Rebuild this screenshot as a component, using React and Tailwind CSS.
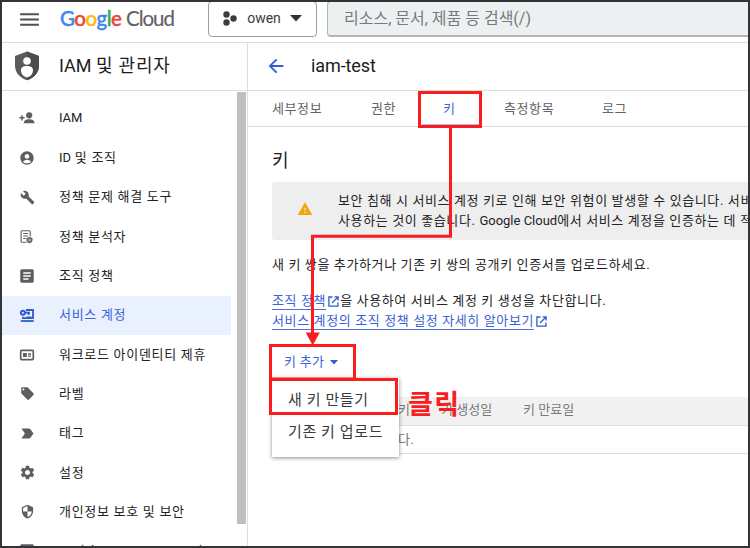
import React from "react";
import {
  MdMenu, MdAccountCircle, MdBuild, MdArticle, MdLocalOffer,
  MdLabelImportant, MdSettings, MdSecurity, MdArrowBack, MdWarning,
} from "react-icons/md";

const FONT = "font-['Roboto','Noto_Sans_CJK_KR',sans-serif]";

function PersonAddIcon() {
  return (
    <svg width="17" height="16" viewBox="0 0 17 16" fill="currentColor">
      <circle cx="10.800" cy="5.200" r="3.300" />
      <path d="M5 13.600c0-3 2.500-4.300 5.800-4.300s5.700 1.300 5.700 4.300z" />
      <path d="M2.400 5h1.600v2h2v1.600H4v2H2.400v-2H.4V7h2z" />
    </svg>
  );
}

function PolicyAnalyzerIcon() {
  return (
    <svg width="16" height="16" viewBox="0 0 16 16" fill="none" stroke="currentColor" strokeWidth="1.1">
      <path d="M7.500 13.200H3.100a1 1 0 0 1-1-1V2.800a1 1 0 0 1 1-1h7.100a1 1 0 0 1 1 1V7.500" />
      <path d="M4.200 4.500h4.900M4.200 7h4.900M4.200 9.500h2.600" />
      <path d="M10.500 8l3 1v2c0 1.800-1.400 2.800-3 3.400-1.600-.6-3-1.600-3-3.400V9z" fill="currentColor" stroke="none" />
      <circle cx="10.500" cy="11" r="1" stroke="white" strokeWidth=".6" />
    </svg>
  );
}

function ServiceAccountIcon() {
  return (
    <svg width="16" height="16" viewBox="0 0 16 16" fill="none" stroke="currentColor" strokeWidth="1.800">
      <circle cx="3.900" cy="5.700" r="2" strokeWidth="2" />
      <path d="M5.800 5.700H11M9.600 5.700v2.200" />
      <path d="M7 3h7v8.200H4V9.800M7.500 10.400h5" />
      <path d="M1.800 14h12.900" />
    </svg>
  );
}

function WorkloadIcon() {
  return (
    <svg width="16" height="16" viewBox="0 0 16 16" fill="none" stroke="currentColor">
      <rect x="1.700" y="3.400" width="12.600" height="9.200" rx="1" strokeWidth="1.700" />
      <rect x="4" y="6" width="3.800" height="4" fill="currentColor" stroke="none" />
      <path d="M9 7h3M9 9.200h3" strokeWidth="1.300" />
    </svg>
  );
}

function ShieldPersonIcon() {
  return (
    <svg width="24" height="30" viewBox="0 0 24 30">
      <path d="M12 .5L24 5v9.500c0 7-5 12.500-12 14.800C5 27 0 21.500 0 14.500V5z" fill="#5a5a5c" />
      <path d="M12 .5L24 5v9.500c0 7-5 12.500-12 14.800z" fill="#4c4c4e" />
      <circle cx="12" cy="10" r="3.800" fill="white" />
      <path d="M6 19.300c0-3 2.500-4.300 6-4.300s6 1.300 6 4.300c0 3.600-2.500 6.400-6 7.200-3.500-.8-6-3.600-6-7.200z" fill="white" />
    </svg>
  );
}

function ProjectIcon() {
  return (
    <svg width="14" height="15" viewBox="0 0 14 15" fill="#3a3c40">
      <circle cx="3.500" cy="3.500" r="3.200" />
      <circle cx="3.500" cy="11.500" r="3.200" />
      <circle cx="10.500" cy="7.500" r="3.200" />
    </svg>
  );
}

function ExternalIcon() {
  return (
    <svg className="ml-[2px] mr-px shrink-0" width="11" height="11" viewBox="0 0 11 11" fill="none" stroke="#2f5bd3" strokeWidth="1.300">
      <path d="M4.500 1H.9v9.100H10V6.500M6.500.900H10.100V4.500M10 1L4 7" />
    </svg>
  );
}

const navItems = [
  { latin: "IAM", label: "", icon: <PersonAddIcon /> },
  { latin: "ID", label: " 및 조직", icon: <MdAccountCircle size={16} /> },
  { label: "정책 문제 해결 도구", icon: <MdBuild size={15} /> },
  { label: "정책 분석자", icon: <PolicyAnalyzerIcon /> },
  { label: "조직 정책", icon: <MdArticle size={18} className="shrink-0" /> },
  { label: "서비스 계정", icon: <ServiceAccountIcon />, active: true },
  { label: "워크로드 아이덴티티 제휴", icon: <WorkloadIcon /> },
  { label: "라벨", icon: <MdLocalOffer size={15} /> },
  { label: "태그", icon: <MdLabelImportant size={17} className="shrink-0" /> },
  { label: "설정", icon: <MdSettings size={17} className="shrink-0" /> },
  { label: "개인정보 보호 및 보안", icon: <MdSecurity size={15} /> },
  { latin: "IAP(Identity-Aware Proxy)", label: "", icon: <MdArticle size={18} className="shrink-0" /> },
];

function NavItem({ item }) {
  return (
    <li className={`flex h-[39.35px] w-[229px] shrink-0 items-center pl-[17px] whitespace-nowrap ${item.active ? "bg-[#eaf1fe] text-[#3b62d6]" : "text-[#232326]"}`}>
      <span className={`flex w-4 justify-center ${item.active ? "text-[#2f5bd3]" : "text-[#5c5e61]"}`}>{item.icon}</span>
      <span className="ml-6 text-[13px] leading-5">
        {item.latin && <span className="tracking-[-0.1px]">{item.latin}</span>}
        <span className="tracking-[0.7px]">{item.label}</span>
      </span>
    </li>
  );
}

function Header() {
  return (
    <header className="flex h-[41px] shrink-0 items-start border-b border-[#dcdddf]">
      <MdMenu size={25} className="mt-[5px] ml-[15px] shrink-0 text-[#505154]" />
      <div className="ml-[18px] flex h-8 w-[148px] shrink-0 items-center gap-[4px] whitespace-nowrap font-['Lato',sans-serif] text-[20.500px] leading-8">
        <span className="w-[62px] tracking-[-0.550px] font-medium [-webkit-text-stroke:0.400px_currentColor]">
          <span className="text-[#4285f4]">G</span>
          <span className="text-[#ea4335]">o</span>
          <span className="text-[#fbbc04]">o</span>
          <span className="text-[#4285f4]">g</span>
          <span className="text-[#34a853]">l</span>
          <span className="text-[#ea4335]">e</span>
        </span>
        <span className="tracking-[-1.050px] text-[#5f6368] [-webkit-text-stroke:0.200px_currentColor]">Cloud</span>
      </div>
      <button className="-mt-px flex h-[36px] w-[109px] shrink-0 items-center rounded-[4px] border border-[#9b9fa4] pb-px pl-[14px]">
        <ProjectIcon />
        <span className="ml-[10px] w-[34px] text-[14px] text-[#3a3c40]">owen</span>
        <svg className="ml-[9px]" width="12" height="7" viewBox="0 0 12 7"><path d="M0 0h12L6 6.500z" fill="#303236" /></svg>
      </button>
      <div className="-mt-px ml-[10px] flex h-[36px] grow items-center rounded-l-[4px] border border-r-0 border-b-2 border-[#b0b6b9] bg-[#ecf0f1] pl-[16px] text-[16px] whitespace-nowrap text-[#777a7d]">
        리소스, 문서, 제품 등 검색(/)
      </div>
    </header>
  );
}

function Sidebar() {
  return (
    <aside className="flex w-[246px] shrink-0 flex-col border-r border-[#dcdddf]">
      <div className="flex h-12 shrink-0 items-center border-b border-[#dcdddf] pb-px pl-[13px]">
        <ShieldPersonIcon />
        <h1 className="ml-5 text-[18px] leading-7 whitespace-nowrap text-[#1d1d20]">
          IAM <span className="tracking-[0.8px]">및 관리자</span>
        </h1>
      </div>
      <div className="flex min-h-0 grow justify-between overflow-hidden">
        <ul className="flex flex-col pt-[7.800px]">
          {navItems.map((item, i) => <NavItem key={i} item={item} />)}
        </ul>
        <div className="mt-px mr-px h-[432px] w-[9px] shrink-0 bg-[#bfbfbf]" />
      </div>
    </aside>
  );
}

const tabs = [
  { label: "세부정보", width: "w-[99px]" },
  { label: "권한", width: "w-[72px]" },
  { label: "키", width: "w-[61px]", active: true },
  { label: "측정항목", width: "w-[98px]" },
  { label: "로그", width: "w-[60px]" },
];

function KeyLink({ children }) {
  return <a className="mt-px border-b border-[#4c6fda] leading-4 text-[#3b62d6]">{children}</a>;
}

function Main() {
  return (
    <main className="flex min-w-0 grow flex-col overflow-hidden text-[13px] tracking-[0.620px] whitespace-nowrap text-[#232326]">
      <div className="flex h-12 shrink-0 items-center border-b border-[#dcdddf] pb-[2px] pl-[17px]">
        <MdArrowBack size={22} className="text-[#2f5bd3]" />
        <h2 className="ml-6 text-[18px] tracking-[-0.100px] text-[#1d1d20]">iam-test</h2>
      </div>
      <nav className="flex h-9 shrink-0 items-center border-b border-[#dcdddf] pl-6 text-[#626467]">
        {tabs.map((t) => (
          <span key={t.label} className={`${t.width} tracking-[0.600px] ${t.active ? "text-[#3b62d6]" : ""}`}>{t.label}</span>
        ))}
      </nav>
      <div className="flex grow flex-col pl-6">
        <h3 className="mt-[20px] h-[28px] text-[18px] leading-7 text-[#1d1d20]">키</h3>
        <div className="mt-[7px] flex h-[58px] shrink-0 items-center rounded-l-[3px] bg-[#eeeeee] pl-[25px]">
          <MdWarning size={16} className="mt-[-5px] shrink-0 text-[#f0a60d]" />
          <p className="ml-[25px] leading-5">
            보안 침해 시 서비스 계정 키로 인해 보안 위험이 발생할 수 있습니다. 서비스<br />
            사용하는 것이 좋습니다. <span className="tracking-normal">Google Cloud</span>에서 서비스 계정을 인증하는 데 적합
          </p>
        </div>
        <p className="mt-[15px] leading-5">새 키 쌍을 추가하거나 기존 키 쌍의 공개키 인증서를 업로드하세요.</p>
        <div className="mt-4 flex h-5 items-center">
          <KeyLink>조직 정책</KeyLink>
          <ExternalIcon />
          <span>을 사용하여 서비스 계정 키 생성을 차단합니다.</span>
        </div>
        <div className="flex h-5 items-center">
          <KeyLink>서비스 계정의 조직 정책 설정 자세히 알아보기</KeyLink>
          <ExternalIcon />
        </div>
        <div className="relative mt-[15px] flex h-8 w-[83px] items-center pl-3 text-[#3b62d6]">
          <span className="-mt-px w-[46px] tracking-[0.300px]">키 추가</span>
          <svg width="8" height="5" viewBox="0 0 8 5"><path d="M0 0h8L4 4.500z" fill="#2f5bd3" /></svg>
          <div className="absolute top-[32px] left-0 z-10 flex h-[79px] w-[127px] flex-col bg-white pt-[6px] pl-4 text-[15px] tracking-[0.600px] text-[#3a3c40] shadow-[0_1px_4px_rgba(0,0,0,0.45)]">
            <span className="h-8 leading-8">새 키 만들기</span>
            <span className="h-8 leading-8">기존 키 업로드</span>
          </div>
        </div>
        <div className="mt-[19px] flex h-[29px] shrink-0 items-center border-b border-[#dcdddf] bg-[#f1f1f1] pb-[3px] pl-[126px] tracking-[0.050px] text-[#76787b]">
          <span className="w-[43px]">키</span>
          <span className="w-[82px]">키 생성일</span>
          <span>키 만료일</span>
        </div>
        <div className="flex h-7 shrink-0 items-center border-b border-[#dcdddf] pl-[126px] text-[#76787b]">다.</div>
      </div>
    </main>
  );
}

function Annotations() {
  return (
    <>
      <svg className="pointer-events-none absolute inset-0 z-20" width="750" height="548" fill="none" stroke="#fb1d1d" strokeWidth="3">
        <path d="M422 125h57" stroke="#8fa6e8" strokeWidth="1.500" />
        <rect x="419.500" y="92.500" width="61" height="34" />
        <path d="M450.500 128V236.300H312.500V334" />
        <path d="M305.800 332.500h14L312.700 345.500z" fill="#fb1d1d" stroke="none" />
        <rect x="270.500" y="345.500" width="84" height="33.500" />
        <rect x="270.500" y="379.500" width="126" height="34" />
      </svg>
      <span className="absolute top-[385px] left-[408px] z-20 font-['Noto_Sans_CJK_KR',sans-serif] text-[27px] leading-9 font-bold tracking-[1.500px] whitespace-nowrap text-[#fb1d1d]">클릭</span>
    </>
  );
}

export default function App() {
  return (
    <div className={`relative flex h-[548px] w-[750px] flex-col overflow-hidden border-2 border-[#343436] bg-white ${FONT}`}>
      <Header />
      <div className="flex min-h-0 grow">
        <Sidebar />
        <Main />
      </div>
      <div className="absolute inset-0 -m-[2px]"><Annotations /></div>
    </div>
  );
}
